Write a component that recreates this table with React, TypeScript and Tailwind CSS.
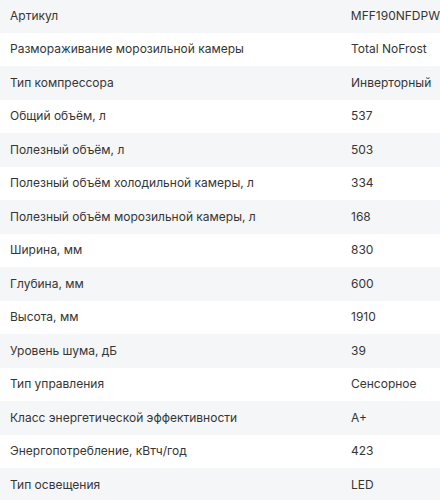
import React from "react";

const rows: [string, string][] = [
  ["Артикул", "MFF190NFDPW"],
  ["Размораживание морозильной камеры", "Total NoFrost"],
  ["Тип компрессора", "Инверторный"],
  ["Общий объём, л", "537"],
  ["Полезный объём, л", "503"],
  ["Полезный объём холодильной камеры, л", "334"],
  ["Полезный объём морозильной камеры, л", "168"],
  ["Ширина, мм", "830"],
  ["Глубина, мм", "600"],
  ["Высота, мм", "1910"],
  ["Уровень шума, дБ", "39"],
  ["Тип управления", "Сенсорное"],
  ["Класс энергетической эффективности", "A+"],
  ["Энергопотребление, кВтч/год", "423"],
  ["Тип освещения", "LED"],
];

export default function App() {
  return (
    <div
      className="w-[440px] h-[500px] overflow-hidden bg-white text-[#353535] text-[12px]"
      style={{ fontFamily: "Inter, 'Noto Sans', sans-serif" }}
    >
      <div className="mt-[-1px]">
        {rows.map(([k, v], i) => (
          <div
            key={k}
            className={`flex items-center h-[33.5px] ${i % 2 === 0 ? "bg-[#f5f6f8]" : "bg-white"}`}
          >
            <div className="w-[351px] pl-[10px] whitespace-nowrap">{k}</div>
            <div className="whitespace-nowrap">{v}</div>
          </div>
        ))}
      </div>
    </div>
  );
}
